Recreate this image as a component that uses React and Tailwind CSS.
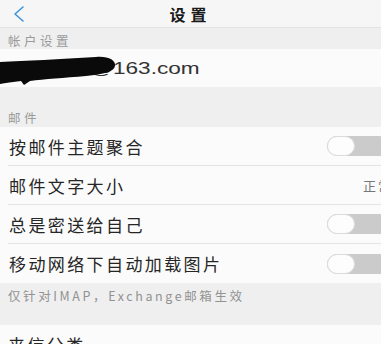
import React from "react";

const cjk = { fontFamily: '"Noto Sans CJK SC", "Noto Sans", sans-serif' };

function Toggle() {
  return (
    <div className="-mr-[8px] flex h-[20px] w-[62px] shrink-0 items-center rounded-full bg-[#cbcbcb]">
      <div className="h-[20px] w-[28px] rounded-full border border-[#dcdcdc] bg-[#fdfdfd]" />
    </div>
  );
}

function Row({ label, right, last }) {
  return (
    <div className="flex h-[39px] flex-col bg-[#fbfbfb] pl-[8px]">
      <div className="flex flex-1 items-center justify-between overflow-visible">
        <span className="pl-[1px] text-[17px] leading-none tracking-[2.4px] text-[#262626]">{label}</span>
        {right}
      </div>
      {!last && <div className="h-px bg-[#e4e4e4]" />}
    </div>
  );
}

export default function App() {
  return (
    <div className="h-[344px] w-[381px] overflow-hidden bg-[#efefef]" style={cjk}>
      {/* header */}
      <div className="flex h-[28px] items-center border-b border-[#e2e2e2] bg-[#f6f6f6]">
        <div className="flex w-[40px] shrink-0 items-center pl-[12px]">
          <svg width="14" height="16" viewBox="0 0 14 16" fill="none">
            <path d="M11 1 L3 8 L11 15" stroke="#3f93dc" strokeWidth="1.6" strokeLinecap="round" strokeLinejoin="round" />
          </svg>
        </div>
        <div className="flex flex-1 justify-center pl-[40px] pr-[40px]">
          <span className="text-[16px] font-bold leading-none tracking-[5px] text-[#1a1a1a]">设置</span>
        </div>
        <div className="w-[40px] shrink-0" />
      </div>

      {/* section: account */}
      <div className="flex h-[21px] items-end pb-[2px] pl-[8px]">
        <span className="text-[12.5px] leading-none tracking-[3.5px] text-[#9a9a9a]">帐户设置</span>
      </div>
      <div className="relative flex h-[38px] items-center justify-between overflow-hidden bg-[#fbfbfb]">
        <span
          className="ml-[90px] origin-left scale-x-[1.33] text-[17px] leading-none text-[#333]"
          style={{ fontFamily: '"Liberation Sans", Arial, sans-serif' }}
        >
          @163.com
        </span>
        <span className="-mr-[4px] text-[14px] leading-none text-[#bbb]">›</span>
        <svg className="absolute left-0 top-[5px]" width="118" height="32" viewBox="0 0 118 32">
          <path
            d="M0 8 C25 7 60 5 96 3 C108 2 116 6 115 12 C114 18 104 20 86 22 C64 24 44 25 30 27 L24 31 L21 27 C13 28 5 29 0 30 Z"
            fill="#0a0a0a"
          />
        </svg>
      </div>

      {/* section: mail */}
      <div className="flex h-[40px] items-end pb-[3px] pl-[8px]">
        <span className="text-[12.5px] leading-none tracking-[3.5px] text-[#9a9a9a]">邮件</span>
      </div>
      <div className="overflow-hidden">
        <Row label="按邮件主题聚合" right={<Toggle />} />
        <Row
          label="邮件文字大小"
          right={<span className="-mr-[12px] text-[13px] leading-none tracking-[2px] text-[#777]">正常</span>}
        />
        <Row label="总是密送给自己" right={<Toggle />} />
        <Row label="移动网络下自动加载图片" right={<Toggle />} last />
      </div>
      <div className="flex h-[42px] items-start pl-[8px] pt-[7px]">
        <span className="text-[12.5px] leading-none tracking-[2.6px] text-[#929292]">仅针对IMAP，Exchange邮箱生效</span>
      </div>

      {/* next section */}
      <div className="flex h-[40px] items-start bg-[#fbfbfb] pl-[8px] pt-[11px]">
        <span className="text-[17px] leading-none tracking-[2.4px] text-[#262626]">来信分类</span>
      </div>
    </div>
  );
}
